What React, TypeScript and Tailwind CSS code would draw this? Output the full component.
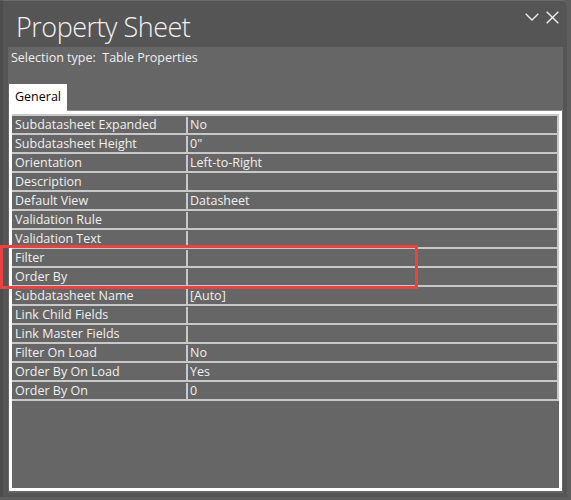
import React from "react";

const rows: [string, string][] = [
  ["Subdatasheet Expanded", "No"],
  ["Subdatasheet Height", '0"'],
  ["Orientation", "Left-to-Right"],
  ["Description", ""],
  ["Default View", "Datasheet"],
  ["Validation Rule", ""],
  ["Validation Text", ""],
  ["Filter", ""],
  ["Order By", ""],
  ["Subdatasheet Name", "[Auto]"],
  ["Link Child Fields", ""],
  ["Link Master Fields", ""],
  ["Filter On Load", "No"],
  ["Order By On Load", "Yes"],
  ["Order By On", "0"],
];

export default function App() {
  return (
    <div className="relative w-[571px] h-[500px] overflow-hidden bg-[#5e5e5e] font-['Open_Sans','Noto_Sans',sans-serif]">
      <div className="flex h-[497px] w-[567px] flex-col rounded-tr-[6px] rounded-tl-[3px] border-l-[3px] border-t border-l-[#4d4d4d] border-t-[#6c6c6c] bg-[#555555]">
        {/* header */}
        <div className="flex h-[46px] shrink-0 items-start justify-between">
          <div className="pl-[13px] pt-[12px] text-[27px] font-light leading-none tracking-[-0.5px] text-[#f2f2f2]">
            Property Sheet
          </div>
          <div className="flex items-start gap-[7px] pr-[8px]">
            <svg className="mt-[12px]" width="14" height="8" viewBox="0 0 14 8">
              <polyline points="0.7,0.7 7,7 13.3,0.7" fill="none" stroke="#eeeeee" strokeWidth="1.3" />
            </svg>
            <svg className="mt-[10px]" width="13" height="13" viewBox="0 0 13 13">
              <line x1="0.7" y1="0.7" x2="12.3" y2="12.3" stroke="#eeeeee" strokeWidth="1.4" />
              <line x1="12.3" y1="0.7" x2="0.7" y2="12.3" stroke="#eeeeee" strokeWidth="1.4" />
            </svg>
          </div>
        </div>
        {/* panel */}
        <div className="mb-[4px] ml-[5px] flex w-[555px] flex-1 flex-col bg-[#666666] pb-[2px]">
          <div className="h-[37px] shrink-0 whitespace-pre pl-[3px] pt-[3px] text-[12.5px] leading-[15px] text-[#efefef]">
            {"Selection type:  Table Properties"}
          </div>
          <div className="flex h-[27px] shrink-0">
            <div className="ml-[1px] w-[58px] bg-white pl-[6px] pt-[5px] text-[12.5px] leading-[15px] text-black">
              General
            </div>
            <div className="flex-1 border-b border-[#8c8c8c]" />
          </div>
          <div className="ml-[1px] flex w-[553px] flex-1 flex-col border-[3px] border-white">
            <div className="border-r-2 border-t-2 border-[#c8c8c8]">
              {rows.map(([k, v]) => (
                <div key={k} className="flex h-[19px] border-b-2 border-[#c8c8c8] pt-[1px] text-[12.5px] leading-[16px] text-[#f0f0f0]">
                  <div className="w-[174px] shrink-0 truncate pl-[3px]">{k}</div>
                  <div className="flex-1 border-l-2 border-[#c8c8c8] pl-[2px]">{v}</div>
                </div>
              ))}
            </div>
          </div>
        </div>
      </div>
      <div className="absolute left-0 top-[245px] h-[44px] w-[418px] border-[3px] border-[#e84242]" />
    </div>
  );
}
